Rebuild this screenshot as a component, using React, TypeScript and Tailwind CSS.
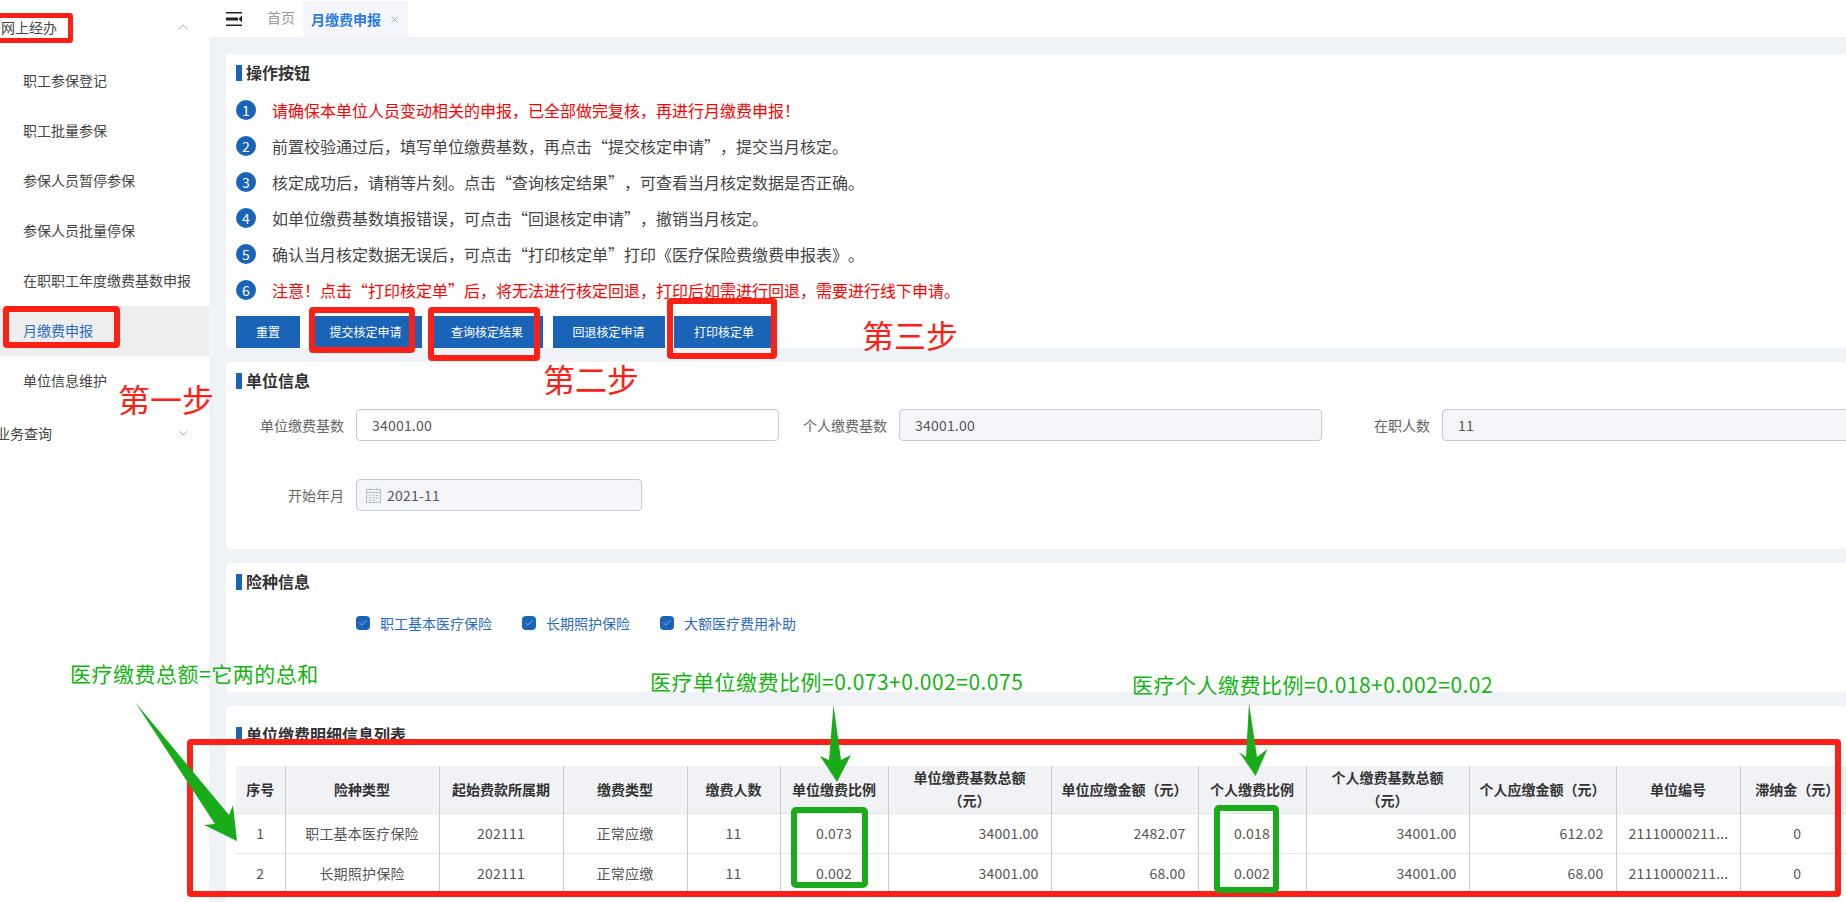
import React from 'react';
import { Check, ChevronDown, ChevronUp, X } from 'lucide-react';

const menuItems = ['职工参保登记', '职工批量参保', '参保人员暂停参保', '参保人员批量停保', '在职职工年度缴费基数申报', '月缴费申报', '单位信息维护'];

const steps = [
  { text: '请确保本单位人员变动相关的申报，已全部做完复核，再进行月缴费申报！', red: true },
  { text: '前置校验通过后，填写单位缴费基数，再点击“提交核定申请”，提交当月核定。' },
  { text: '核定成功后，请稍等片刻。点击“查询核定结果”，可查看当月核定数据是否正确。' },
  { text: '如单位缴费基数填报错误，可点击“回退核定申请”，撤销当月核定。' },
  { text: '确认当月核定数据无误后，可点击“打印核定单”打印《医疗保险费缴费申报表》。' },
  { text: '注意！点击“打印核定单”后，将无法进行核定回退，打印后如需进行回退，需要进行线下申请。', red: true },
];

const actions = ['重置', '提交核定申请', '查询核定结果', '回退核定申请', '打印核定单'];

const columns = [
  { title: '序号', width: 'w-[49px]' },
  { title: '险种类型', width: 'w-[154px]' },
  { title: '起始费款所属期', width: 'w-[124px]' },
  { title: '缴费类型', width: 'w-[124px]' },
  { title: '缴费人数', width: 'w-[93px]' },
  { title: '单位缴费比例', width: 'w-[108px]' },
  { title: '单位缴费基数总额（元）', width: 'w-[163px]' },
  { title: '单位应缴金额（元）', width: 'w-[147px]' },
  { title: '个人缴费比例', width: 'w-[108px]' },
  { title: '个人缴费基数总额（元）', width: 'w-[163px]' },
  { title: '个人应缴金额（元）', width: 'w-[147px]' },
  { title: '单位编号', width: 'w-[124px]' },
  { title: '滞纳金（元）', width: 'w-[114px]' },
];

const rows = [
  ['1', '职工基本医疗保险', '202111', '正常应缴', '11', '0.073', '34001.00', '2482.07', '0.018', '34001.00', '612.02', '21110000211...', '0'],
  ['2', '长期照护保险', '202111', '正常应缴', '11', '0.002', '34001.00', '68.00', '0.002', '34001.00', '68.00', '21110000211...', '0'],
];

const rightAligned = [6, 7, 9, 10];

function CardTitle({ children }: { children: React.ReactNode }) {
  return (
    <div className="flex h-4 items-center gap-1">
      <span className="h-4 w-1.5 bg-[#1a64b8]" />
      <h2 className="pb-[2px] text-base leading-none font-bold text-[#333]">{children}</h2>
    </div>
  );
}

function Field({ label, value, labelWidth, disabled }: { label: string; value: string; labelWidth: string; disabled?: boolean }) {
  return (
    <div className="flex items-center">
      <label className={`${labelWidth} pr-3 text-right text-sm text-[#666]`}>{label}</label>
      <div className={`flex h-8 w-[423px] items-center rounded-sm border border-[#c9cacd] pl-[15px] text-sm tracking-[0.2px] text-[#555] ${disabled ? 'bg-[#f4f6fa]' : 'bg-white'}`}>
        {value}
      </div>
    </div>
  );
}

function MenuToggleIcon() {
  return (
    <svg width="16" height="14" viewBox="0 0 16 14" fill="#222">
      <rect x="0" y="0" width="16" height="1.5" />
      <rect x="0" y="5.5" width="12" height="3" />
      <polygon points="16,3.5 16,10.5 12.5,7" />
      <rect x="0" y="12.5" width="16" height="1.5" />
    </svg>
  );
}

function CalendarIcon() {
  return (
    <svg width="15" height="16" viewBox="0 0 15 16" fill="none" stroke="#b8bfcb" strokeWidth="1">
      <rect x="0.5" y="2.5" width="14" height="13" fill="#eef0f4" />
      <path d="M0.5 5.5H14.5M4 0.5V3.5M11 0.5V3.5" />
      <path d="M3 8.5H5M6.5 8.5H8.5M10 8.5H12M3 11H5M6.5 11H8.5M10 11H12M3 13.5H5M6.5 13.5H8.5" />
    </svg>
  );
}

function Insurance({ label }: { label: string }) {
  return (
    <div className="flex items-center gap-2.5">
      <span className="flex size-3.5 items-center justify-center rounded-sm bg-[#1a64b8]">
        <Check size={10} strokeWidth={1.5} className="text-[#cfe0f5]" />
      </span>
      <span className="text-sm text-[#2a6abf]">{label}</span>
    </div>
  );
}

function Annotations() {
  return (
    <div className="pointer-events-none absolute inset-0">
      <div className="absolute top-[13px] left-[-6px] h-[30px] w-[79px] rounded-[3px] border-[5px] border-[#ff2015]" />
      <div className="absolute top-[306px] left-[3px] h-[42px] w-[117px] rounded-[4px] border-[6px] border-[#ff2015]" />
      <div className="absolute top-[307px] left-[309px] h-[46px] w-[106px] rounded-[4px] border-[6px] border-[#ff2015]" />
      <div className="absolute top-[307px] left-[428px] h-[54px] w-[112px] rounded-[4px] border-[6px] border-[#ff2015]" />
      <div className="absolute top-[298px] left-[667px] h-[61px] w-[110px] rounded-[4px] border-[6px] border-[#ff2015]" />
      <div className="absolute top-[739px] left-[187px] h-[158px] w-[1654px] rounded-[4px] border-[6px] border-[#ff2015]" />
      <div className="absolute top-[807px] left-[791px] h-[81px] w-[77px] rounded-[5px] border-[6px] border-[#1aab1a]" />
      <div className="absolute top-[805px] left-[1214px] h-[88px] w-[65px] rounded-[5px] border-[6px] border-[#1aab1a]" />

      <span className="absolute top-[380px] left-[118px] text-[32px] leading-[36px] text-[#ff2015]">第一步</span>
      <span className="absolute top-[360px] left-[543px] text-[32px] leading-[36px] text-[#ff2015]">第二步</span>
      <span className="absolute top-[316px] left-[862px] text-[32px] leading-[36px] text-[#ff2015]">第三步</span>
      <span className="absolute top-[659px] left-[70px] text-[21px] leading-[28px] tracking-[0.5px] text-[#14b414]">医疗缴费总额=它两的总和</span>
      <span className="absolute top-[667px] left-[650px] text-[21px] leading-[28px] tracking-[0.5px] text-[#14b414]">医疗单位缴费比例=0.073+0.002=0.075</span>
      <span className="absolute top-[670px] left-[1132px] text-[21px] leading-[28px] tracking-[0.5px] text-[#14b414]">医疗个人缴费比例=0.018+0.002=0.02</span>

      <svg className="absolute inset-0" width="1846" height="902" fill="#1aab1a">
        <polygon points="135,702 229,815 233,805 237,841 204,825 215,824" />
        <polygon points="833.5,705 841,760 851,755 837,782 820,756 829,760" />
        <polygon points="1249,703 1257,757 1267.5,749 1255.6,776 1239,752 1246,757" />
      </svg>
    </div>
  );
}

export default function App() {
  return (
    <div className="relative flex h-[902px] w-[1846px] overflow-hidden bg-[#eff2f6] font-['Noto_Sans_CJK_SC','Noto_Sans',sans-serif] [text-spacing-trim:space-all]">
      <aside className="w-[209px] shrink-0 bg-white pt-[3px] text-sm text-[#444]">
        <div className="flex h-[50px] items-center justify-between pr-[18px] pb-[2px] pl-px">
          <span>网上经办</span>
          <ChevronUp size={16} strokeWidth={1} className="text-[#999]" />
        </div>
        <div className="mt-[3px]">
          {menuItems.map((item) => (
            <div key={item} className={`flex h-[50px] items-center pb-[3px] pl-[23px] ${item === '月缴费申报' ? 'bg-[#eeeeee] text-[#2a6abf]' : ''}`}>
              {item}
            </div>
          ))}
        </div>
        <div className="mt-[3px] flex h-[50px] items-center justify-between pr-[18px] pb-[2px]">
          <span className="-ml-1">业务查询</span>
          <ChevronDown size={16} strokeWidth={1} className="text-[#999]" />
        </div>
      </aside>

      <main className="w-[1637px] shrink-0">
        <header className="flex h-[37px] items-end bg-white pl-[17px]">
          <div className="flex h-[37px] w-[41px] items-center">
            <MenuToggleIcon />
          </div>
          <span className="mb-2.5 w-9 text-sm text-[#999]">首页</span>
          <div className="flex h-9 w-[105px] items-center bg-[#f4f6fb] pl-2">
            <span className="text-sm font-bold text-[#2a7be0]">月缴费申报</span>
            <X size={11} strokeWidth={1.5} className="ml-2 text-[#8a9ab5]" />
          </div>
        </header>

        <div className="flex flex-col gap-3.5 pt-[17px] pl-[17px]">
          <section className="rounded-sm bg-white pt-[11px] pl-2.5">
            <CardTitle>操作按钮</CardTitle>
            <ol className="mt-[11px]">
              {steps.map((step, i) => (
                <li key={step.text} className="flex h-9 items-center gap-4">
                  <span className="flex size-5 items-center justify-center rounded-full bg-[#1a64b8] text-sm text-white">{i + 1}</span>
                  <span className={`text-base ${step.red ? 'text-[#ff0000]' : 'text-[#444]'}`}>{step.text}</span>
                </li>
              ))}
            </ol>
            <div className="mt-2 flex gap-[9.5px]">
              {actions.map((action) => (
                <button key={action} className="h-8 bg-[#1a64b8] px-5 text-xs text-white">{action}</button>
              ))}
            </div>
          </section>

          <section className="h-[187px] rounded-sm bg-white pt-[11px] pl-2.5">
            <CardTitle>单位信息</CardTitle>
            <div className="mt-5 -ml-2.5 flex">
              <Field label="单位缴费基数" value="34001.00" labelWidth="w-[130px]" />
              <Field label="个人缴费基数" value="34001.00" labelWidth="w-[120px]" disabled />
              <Field label="在职人数" value="11" labelWidth="w-[120px]" disabled />
            </div>
            <div className="mt-[38px] -ml-2.5 flex items-center">
              <label className="w-[130px] pr-3 text-right text-sm text-[#666]">开始年月</label>
              <div className="flex h-8 w-[286px] items-center gap-1.5 rounded-sm border border-[#c9cacd] bg-[#f4f6fa] pl-[9px] text-sm tracking-[0.2px] text-[#555]">
                <CalendarIcon />
                2021-11
              </div>
            </div>
          </section>

          <section className="h-[129px] rounded-sm bg-white pt-[11px] pl-2.5">
            <CardTitle>险种信息</CardTitle>
            <div className="mt-[23px] ml-[120px] flex gap-[30px]">
              <Insurance label="职工基本医疗保险" />
              <Insurance label="长期照护保险" />
              <Insurance label="大额医疗费用补助" />
            </div>
          </section>

          <section className="h-[300px] rounded-sm bg-white pt-[21px] pl-2.5">
            <CardTitle>单位缴费明细信息列表</CardTitle>
            <table className="mt-[23px] w-[1618px] table-fixed border-collapse text-sm text-[#555]">
              <colgroup>
                {columns.map((col) => <col key={col.title} className={col.width} />)}
              </colgroup>
              <thead>
                <tr className="h-[47px] bg-[#f0f2f6]">
                  {columns.map((col, i) => (
                    <th key={col.title} className={`text-center leading-[23px] font-bold text-[#333] ${i > 0 ? 'border-l border-[#cccccc]' : ''} ${i === 6 || i === 9 ? 'px-5' : 'px-1'}`}>{col.title}</th>
                  ))}
                </tr>
              </thead>
              <tbody>
                {rows.map((row) => (
                  <tr key={row[0]} className="h-10 border-t border-[#e4e4e4]">
                    {row.map((cell, i) => (
                      <td key={i} className={`px-3 tracking-[0.2px] ${rightAligned.includes(i) ? 'text-right' : 'text-center'} ${i > 0 ? 'border-l border-[#cccccc]' : ''}`}>{cell}</td>
                    ))}
                  </tr>
                ))}
              </tbody>
            </table>
          </section>
        </div>
      </main>

      <Annotations />
    </div>
  );
}
